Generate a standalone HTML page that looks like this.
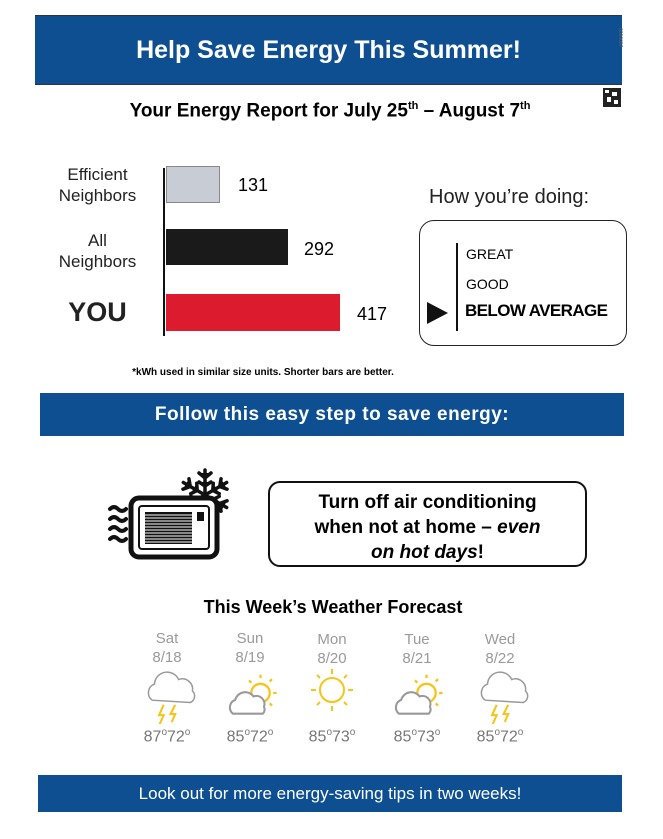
<!DOCTYPE html>
<html><head><meta charset="utf-8"><style>
body{margin:0;width:663px;height:839px;background:#fff;position:relative;overflow:hidden;font-family:"Liberation Sans","DejaVu Sans",sans-serif;}
.a{position:absolute;}
.ban{position:absolute;background:#0e4f92;color:#fff;text-align:center;}
.c{text-align:center;}
.wd{position:absolute;width:80px;text-align:center;color:#9a9a9a;font-size:15px;line-height:19px;}
.tp{position:absolute;width:80px;text-align:center;color:#777;font-size:16px;}
.tp sup{font-size:10px;}
</style></head><body>
<div class="ban" style="left:35px;top:15px;width:587px;height:68px;line-height:68px;font-size:25px;font-weight:bold;border-top:1px solid #333;border-bottom:1px solid #333">Help Save Energy This Summer!</div>
<div class="a" style="left:617px;top:28px;font-size:5px;color:#666;writing-mode:vertical-rl">0000097</div>
<svg class="a" style="left:603px;top:88px" width="18" height="19"><rect width="18" height="19" fill="#222"/><rect x="2" y="2" width="4" height="3" fill="#fff"/><rect x="9" y="4" width="5" height="4" fill="#fff"/><rect x="4" y="9" width="4" height="5" fill="#fff"/><rect x="11" y="12" width="4" height="4" fill="#fff"/></svg>
<div class="a c" style="left:60px;top:100px;width:540px;font-size:19px;font-weight:bold;">Your Energy Report for July 25<sup style="font-size:11px">th</sup> – August 7<sup style="font-size:11px">th</sup></div>

<div class="a c" style="left:45px;top:164px;width:105px;font-size:17px;line-height:21px;color:#222">Efficient<br>Neighbors</div>
<div class="a c" style="left:45px;top:230px;width:105px;font-size:17px;line-height:21px;color:#222">All<br>Neighbors</div>
<div class="a c" style="left:45px;top:297px;width:105px;font-size:27px;font-weight:bold;color:#222">YOU</div>
<div class="a" style="left:163px;top:168px;width:2px;height:168px;background:#111"></div>
<div class="a" style="left:166px;top:166px;width:54px;height:37px;background:#c8ccd4;border:1px solid #888;box-sizing:border-box"></div>
<div class="a" style="left:166px;top:229px;width:122px;height:36px;background:#1a1a1a"></div>
<div class="a" style="left:166px;top:294px;width:174px;height:37px;background:#dc1b2e"></div>
<div class="a" style="left:238px;top:175px;font-size:18px">131</div>
<div class="a" style="left:304px;top:239px;font-size:18px">292</div>
<div class="a" style="left:357px;top:304px;font-size:18px">417</div>

<div class="a" style="left:429px;top:186px;font-size:20px;color:#222">How you’re doing:</div>
<div class="a" style="left:419px;top:220px;width:208px;height:126px;border:1.5px solid #222;border-radius:15px;box-sizing:border-box"></div>
<div class="a" style="left:456px;top:243px;width:2px;height:88px;background:#111"></div>
<div class="a" style="left:466px;top:246px;font-size:14px">GREAT</div>
<div class="a" style="left:466px;top:276px;font-size:14px">GOOD</div>
<div class="a" style="left:465px;top:301px;font-size:17px;font-weight:bold;letter-spacing:-0.6px">BELOW AVERAGE</div>
<svg class="a" style="left:427px;top:302px" width="22" height="22"><polygon points="0,0 21,11 0,22" fill="#111"/></svg>

<div class="a c" style="left:80px;top:367px;width:366px;font-size:10px;font-weight:bold">*kWh used in similar size units. Shorter bars are better.</div>

<div class="ban" style="left:40px;top:393px;width:584px;height:43px;line-height:43px;font-size:19px;font-weight:bold;letter-spacing:0.5px">Follow this easy step to save energy:</div>

<svg class="a" style="left:105px;top:465px" width="132" height="95">
<g stroke="#111" stroke-width="4" fill="none" stroke-linecap="round">
<path d="M5,44 q4,-4 8,0 t8,0"/><path d="M5,54 q4,-4 8,0 t8,0"/><path d="M5,64 q4,-4 8,0 t8,0"/><path d="M5,74 q4,-4 8,0 t8,0"/>
</g>
<g transform="translate(100,30)" stroke="#111" stroke-width="3.5" stroke-linecap="round">
<g id="arm"><path d="M0,0V-25M-6,-22l6,5l6,-5M-6,-13l6,4l6,-4"/></g>
<use href="#arm" transform="rotate(60)"/><use href="#arm" transform="rotate(120)"/><use href="#arm" transform="rotate(180)"/><use href="#arm" transform="rotate(240)"/><use href="#arm" transform="rotate(300)"/>
</g>
<rect x="26" y="33" width="86" height="59" rx="8" fill="#fff" stroke="#111" stroke-width="5"/>
<rect x="34" y="41" width="70" height="43" rx="3" fill="none" stroke="#111" stroke-width="2"/>
<rect x="40" y="47" width="47" height="32" fill="#111"/>
<g stroke="#fff" stroke-width="1"><path d="M40,50H87M40,53H87M40,56H87M40,59H87M40,62H87M40,65H87M40,68H87M40,71H87M40,74H87M40,77H87"/></g>
<rect x="92" y="47" width="7" height="9" fill="#111"/>
</svg>

<div class="a c" style="left:268px;top:481px;width:319px;height:86px;border:2px solid #111;border-radius:12px;box-sizing:border-box;font-size:19px;font-weight:bold;line-height:25px;padding-top:7px">Turn off air conditioning<br>when not at home – <i>even<br>on hot days</i>!</div>

<div class="a c" style="left:163px;top:597px;width:340px;font-size:18px;font-weight:bold">This Week’s Weather Forecast</div>

<div class="wd" style="left:127px;top:629px">Sat<br>8/18</div>
<div class="wd" style="left:210px;top:629px">Sun<br>8/19</div>
<div class="wd" style="left:292px;top:630px">Mon<br>8/20</div>
<div class="wd" style="left:377px;top:630px">Tue<br>8/21</div>
<div class="wd" style="left:460px;top:630px">Wed<br>8/22</div>

<svg class="a" style="left:140px;top:664px" width="400" height="60">
<defs>
<g id="storm"><path d="M8,28 a8,8 0 0 1 2,-14 a11,11 0 0 1 21,-4 a9,9 0 0 1 12,10 a6,6 0 0 1 -2,10 z" fill="#fff" stroke="#999" stroke-width="1.3"/>
<path d="M18,32 l-4,9 h4 l-4,9 M28,32 l-4,8 h4 l-3,7" stroke="#f5c518" stroke-width="1.8" fill="none"/></g>
<g id="pc"><g stroke="#f5c518" stroke-width="2"><circle cx="30" cy="20" r="8" fill="none"/><path d="M30,4v3M40,8l-2,2M44,20h-3M40,31l-2,-2M20,9l2,2"/></g>
<path d="M6,38 a7,7 0 0 1 2,-12 a9,9 0 0 1 16,-3 a7,7 0 0 1 9,9 a5,5 0 0 1 -1,6 z" fill="#fff" stroke="#999" stroke-width="1.8"/></g>
</defs>
<use href="#storm" transform="translate(3,4) scale(1.15)"/>
<use href="#pc" transform="translate(86,6) scale(1.15)"/>
<g transform="translate(192,26)" stroke="#f5c518" stroke-width="2" fill="none"><circle r="12"/><path d="M0,-21v5M0,16v5M-21,0h5M16,0h5M-15,-15l3,3M12,12l3,3M-15,15l3,-3M12,-12l3,-3"/></g>
<use href="#pc" transform="translate(252,6) scale(1.15)"/>
<use href="#storm" transform="translate(336,4) scale(1.15)"/>
</svg>

<div class="tp" style="left:127px;top:727px">87<sup>o</sup>72<sup>o</sup></div>
<div class="tp" style="left:210px;top:727px">85<sup>o</sup>72<sup>o</sup></div>
<div class="tp" style="left:292px;top:727px">85<sup>o</sup>73<sup>o</sup></div>
<div class="tp" style="left:377px;top:727px">85<sup>o</sup>73<sup>o</sup></div>
<div class="tp" style="left:460px;top:727px">85<sup>o</sup>72<sup>o</sup></div>

<div class="ban" style="left:38px;top:775px;width:584px;height:37px;line-height:37px;font-size:17px;">Look out for more energy-saving tips in two weeks!</div>
</body></html>
